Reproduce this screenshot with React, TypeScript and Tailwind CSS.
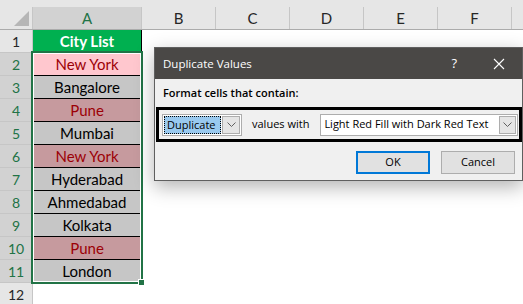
const rows = [
  { n: 1, text: 'City List', kind: 'head' },
  { n: 2, text: 'New York', kind: 'active' },
  { n: 3, text: 'Bangalore', kind: 'plain' },
  { n: 4, text: 'Pune', kind: 'dup' },
  { n: 5, text: 'Mumbai', kind: 'plain' },
  { n: 6, text: 'New York', kind: 'dup' },
  { n: 7, text: 'Hyderabad', kind: 'plain' },
  { n: 8, text: 'Ahmedabad', kind: 'plain' },
  { n: 9, text: 'Kolkata', kind: 'plain' },
  { n: 10, text: 'Pune', kind: 'dup' },
  { n: 11, text: 'London', kind: 'plain' },
  { n: 12, text: '', kind: 'empty' },
];

const cellClass: Record<string, string> = {
  head: 'bg-[#00b050] text-white font-bold border-r border-b border-black',
  active: 'bg-[#ffc7ce] text-[#9c0006] border-r border-b border-black',
  plain: 'bg-[#c6c6c6] text-black border-r border-b border-black',
  dup: 'bg-[#c69a9e] text-[#9c0006] border-r border-b border-black',
  empty: 'bg-white',
};

function Chevron() {
  return (
    <svg width="9" height="6" viewBox="0 0 9 6" fill="none">
      <polyline points="0.5,0.5 4.5,4.5 8.5,0.5" stroke="#606060" strokeWidth="1" />
    </svg>
  );
}

function Dialog() {
  return (
    <div className="absolute left-[154px] top-[47px] w-[369px] h-[134px] border border-[#5f5f5f] bg-[#f0f0f0] shadow-[0_6px_18px_rgba(0,0,0,0.3)] font-['Open_Sans',sans-serif] text-[11px] text-black whitespace-nowrap">
      <div className="h-[31px] bg-[#4a4846] flex items-center pl-[8px] text-white text-[11.5px]">
        <span>Duplicate Values</span>
        <span className="ml-auto mr-[36px] text-[13px]">?</span>
        <svg width="12" height="12" viewBox="0 0 12 12" className="mr-[17px]">
          <path d="M1 1 L11 11 M11 1 L1 11" stroke="white" strokeWidth="1.1" />
        </svg>
      </div>
      <div className="pl-[8px] pt-[6px] h-[28px] font-semibold">Format cells that contain:</div>
      <div className="ml-[1px] w-[366px] h-[35px] border-[3px] border-black flex items-center pl-[3px]">
        <div className="w-[80px] shrink-0 h-[22px] bg-white border border-[#adadad] flex items-center p-[1px]">
          <div className="flex-1 h-full bg-[#99c9ef] border border-dotted border-black flex items-center pl-[2px] leading-none">
            Duplicate
          </div>
          <div className="w-[18px] h-full ml-[1px] bg-[#e5e5e5] border border-[#adadad] flex items-center justify-center">
            <Chevron />
          </div>
        </div>
        <span className="ml-[10px] shrink-0">values with</span>
        <div className="ml-[11px] w-[198px] shrink-0 h-[22px] bg-white border border-[#adadad] flex items-center p-[1px] pl-[3px]">
          <span className="flex-1">Light Red Fill with Dark Red Text</span>
          <div className="w-[17px] h-[18px] bg-[#e5e5e5] border border-[#adadad] flex items-center justify-center">
            <Chevron />
          </div>
        </div>
      </div>
      <div className="flex justify-end gap-[11px] pr-[7px] pt-[9px]">
        <div className="w-[74px] h-[23px] bg-[#e1e1e1] border-2 border-[#0078d7] flex items-center justify-center">OK</div>
        <div className="w-[74px] h-[23px] bg-[#e1e1e1] border border-[#adadad] flex items-center justify-center">Cancel</div>
      </div>
    </div>
  );
}

export default function App() {
  const letters = ['B', 'C', 'D', 'E', 'F'];
  return (
    <div className="relative w-[523px] h-[304px] overflow-hidden bg-white font-['Lato',sans-serif]">
      <div className="h-[7px] bg-[#e6e6e6]" />
      <div className="flex h-[23px] bg-[#e6e6e6] border-b border-[#ababab] text-[15px] text-[#262626]">
        <div className="relative w-[33px] shrink-0 border-r border-[#c6c6c6]">
          <svg width="33" height="22" className="absolute left-0 top-0">
            <polygon points="14,19 29,19 29,4" fill="#b6b6b6" />
          </svg>
        </div>
        <div className="w-[109px] shrink-0 bg-[#d2d2d2] text-[#217346] border-r border-[#c6c6c6] flex items-center justify-center">A</div>
        {letters.map((l) => (
          <div key={l} className="w-[74px] shrink-0 border-r border-[#c6c6c6] flex items-center justify-center">
            {l}
          </div>
        ))}
        <div className="flex-1" />
      </div>
      {rows.map((r) => {
        const sel = r.n >= 2 && r.n <= 11;
        return (
          <div key={r.n} className="flex h-[23px]">
            <div
              className={`w-[33px] shrink-0 border-b border-r border-[#c6c6c6] flex items-center justify-center text-[14px] ${
                sel ? 'bg-[#d2d2d2] text-[#217346]' : 'bg-[#e6e6e6] text-[#262626]'
              }`}
            >
              {r.n}
            </div>
            <div className={`w-[109px] shrink-0 flex items-center justify-center text-[15px] ${cellClass[r.kind]}`}>
              {r.text}
            </div>
            <div className="flex-1" />
          </div>
        );
      })}
      {/* selection */}
      <div className="absolute left-[31px] top-[51px] w-[112px] h-[233px] border-2 border-[#217346] shadow-[inset_0_0_0_1px_white]" />
      <div className="absolute left-[138px] top-[279px] w-[7px] h-[7px] bg-[#217346] border border-white" />
      <Dialog />
    </div>
  );
}
